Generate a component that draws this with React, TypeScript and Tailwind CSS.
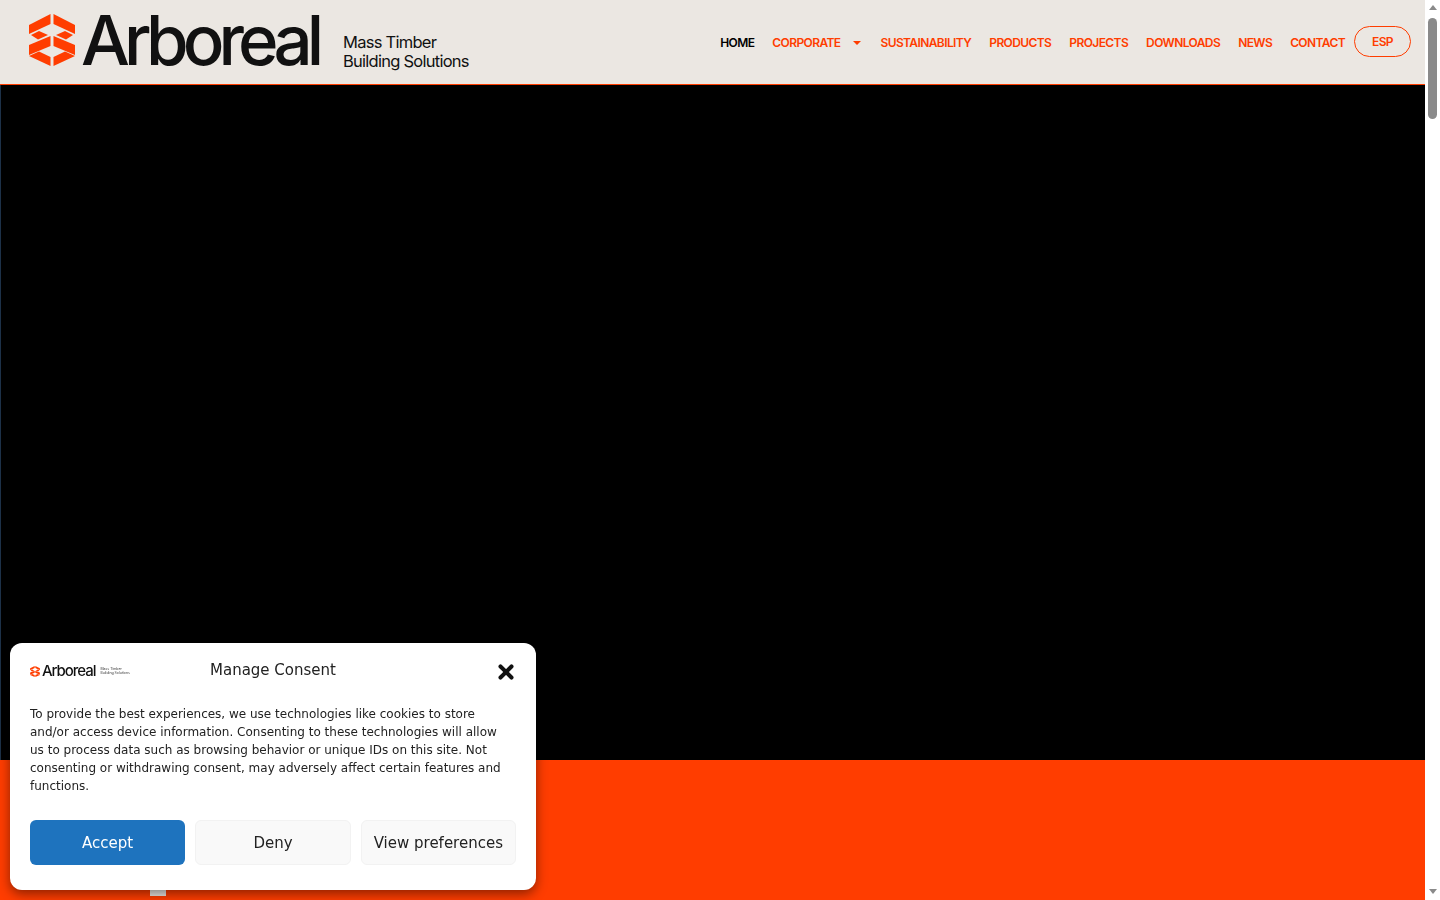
import { X } from "lucide-react";

const navItems = ["SUSTAINABILITY", "PRODUCTS", "PROJECTS", "DOWNLOADS", "NEWS", "CONTACT"];

const blades = [
  "M21.500 0V10L0 20V11Z",
  "M2 21L10 17L19 21L9 25.500Z",
  "M21.500 22V32L0 41V31Z",
  "M0 42L10 37.500L21.500 43V52Z",
];

function LogoMark({ className }: { className: string }) {
  return (
    <svg viewBox="0 0 46 52" className={className} fill="#ff3d00">
      {blades.map((d) => (
        <path key={d} d={d} />
      ))}
      <g transform="matrix(-1 0 0 1 46 0)">
        {blades.map((d) => (
          <path key={d} d={d} />
        ))}
      </g>
    </svg>
  );
}

export default function App() {
  return (
    <div className="flex h-screen overflow-hidden bg-white">
      <div className="flex min-w-0 flex-1 flex-col">
        <header className="flex h-[85px] shrink-0 items-start justify-between border-b border-[#ff3d00] bg-[#ebe7e2] font-['Inter',sans-serif]">
          <div className="flex items-start pl-[29px] pt-[14px]">
            <LogoMark className="h-[52px] w-[46px]" />
            <div className="ml-[6px] mt-[-9px] w-[243px] whitespace-nowrap text-[69px] leading-[71px] font-medium tracking-[-0.085em] text-[#111]">
              Arboreal
            </div>
            <div className="ml-[19px] mt-[19px] text-[16.500px] leading-[19px] tracking-[-0.045em] text-[#111]">
              <div>Mass Timber</div>
              <div>Building Solutions</div>
            </div>
          </div>
          <nav className="flex items-center pr-[14px] pt-[26px] text-[12px] font-semibold tracking-[-0.05em] text-[#ff3d00]">
            <div className="flex items-center pt-[2px]">
              <span className="text-black">HOME</span>
              <span className="ml-[18px]">CORPORATE</span>
              <span className="ml-[13px] mr-[19px] h-0 w-0 border-x-[4px] border-t-[4px] border-x-transparent border-t-[#ff3d00]" />
              {navItems.map((item, i) => (
                <span key={item} className={i === 0 ? "" : "ml-[18px]"}>
                  {item}
                </span>
              ))}
            </div>
            <span className="ml-[9px] flex h-[31px] w-[57px] items-center justify-center rounded-full border border-[#ff3d00]">
              ESP
            </span>
          </nav>
        </header>
        <div className="h-[675px] shrink-0 border-l border-[#1d3148] bg-black" />
        <div className="relative flex-1 bg-[#ff3d00]">
          <div className="absolute left-[150px] top-[125px] h-[11px] w-[16px] bg-[#ebe7e2]" />
        </div>
      </div>

      <div className="flex w-[15px] shrink-0 flex-col items-center bg-white">
        <div className="mt-[5px] h-0 w-0 border-x-[4.500px] border-b-[5px] border-x-transparent border-b-[#8a8a8a]" />
        <div className="mt-[8px] h-[101px] w-[9px] rounded-full bg-[#8a8a8a]" />
        <div className="mt-auto mb-[6px] h-0 w-0 border-x-[4.500px] border-t-[5px] border-x-transparent border-t-[#8a8a8a]" />
      </div>

      <div className="fixed bottom-[10px] left-[10px] w-[526px] rounded-xl bg-white px-5 pb-[25px] pt-[16px] font-['DejaVu_Sans',sans-serif] text-[#222] shadow-[0_4px_12px_rgba(0,0,0,0.45)]">
        <div className="grid h-[17px] grid-cols-3 items-center">
          <div className="flex w-[101px] items-center font-['Inter',sans-serif]">
            <LogoMark className="h-[11px] w-[10px]" />
            <span className="ml-[2px] text-[15px] font-medium tracking-[-0.07em] text-[#111]">Arboreal</span>
            <div className="ml-[5px] text-[3.500px] leading-[4px] text-[#333]">
              <div className="whitespace-nowrap">Mass Timber</div>
              <div className="whitespace-nowrap">Building Solutions</div>
            </div>
          </div>
          <span className="mb-[2px] whitespace-nowrap text-center text-[15px]">Manage Consent</span>
          <X className="mr-[-1px] mt-[2px] h-[22px] w-[22px] justify-self-end text-[#111]" strokeWidth={4.400} />
        </div>
        <p className="mt-[29px] pr-[5px] text-[12px] leading-[18px]">
          To provide the best experiences, we use technologies like cookies to store and/or access device
          information. Consenting to these technologies will allow us to process data such as browsing behavior
          or unique IDs on this site. Not consenting or withdrawing consent, may adversely affect certain
          features and functions.
        </p>
        <div className="mt-[25px] grid grid-cols-3 gap-[10px] text-[15px]">
          <button className="h-[45px] rounded-md bg-[#1e73be] pt-[2px] text-white">Accept</button>
          <button className="h-[45px] rounded-md border border-[#f2f2f2] bg-[#f9f9f9] pt-[2px]">Deny</button>
          <button className="h-[45px] rounded-md border border-[#f2f2f2] bg-[#f9f9f9] pt-[2px]">View preferences</button>
        </div>
      </div>
    </div>
  );
}
